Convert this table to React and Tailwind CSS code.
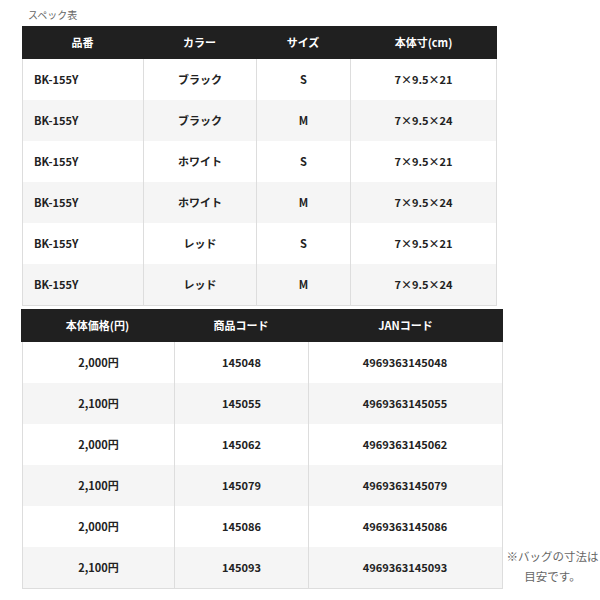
export default function App() {
  const t1 = [
    ["BK-155Y", "ブラック", "S", "7×9.5×21"],
    ["BK-155Y", "ブラック", "M", "7×9.5×24"],
    ["BK-155Y", "ホワイト", "S", "7×9.5×21"],
    ["BK-155Y", "ホワイト", "M", "7×9.5×24"],
    ["BK-155Y", "レッド", "S", "7×9.5×21"],
    ["BK-155Y", "レッド", "M", "7×9.5×24"],
  ];
  const t2 = [
    ["2,000円", "145048", "4969363145048"],
    ["2,100円", "145055", "4969363145055"],
    ["2,000円", "145062", "4969363145062"],
    ["2,100円", "145079", "4969363145079"],
    ["2,000円", "145086", "4969363145086"],
    ["2,100円", "145093", "4969363145093"],
  ];
  return (
    <div
      className="w-[600px] h-[600px] bg-white text-[#222]"
      style={{ fontFamily: '"Noto Sans CJK JP", "Noto Sans", sans-serif' }}
    >
      <div className="pt-[8px] pl-[28px] text-[10px] leading-[14px] text-[#666]">スペック表</div>
      <div className="ml-[22px] mt-[4px] w-[475px]">
        <div className="grid grid-cols-[121px_113px_94px_147px] h-[33px] bg-[#202020] text-white text-[11px] font-bold items-center text-center">
          <div>品番</div>
          <div>カラー</div>
          <div>サイズ</div>
          <div>本体寸(cm)</div>
        </div>
        <div className="border-x border-b border-[#dddddd]">
          {t1.map((r, i) => (
            <div
              key={i}
              className={`grid grid-cols-[120px_113px_94px_146px] h-[41px] text-[11px] font-bold ${i % 2 === 1 ? "bg-[#f5f5f5]" : "bg-white"}`}
            >
              <div className="flex items-center pl-[11px]">{r[0]}</div>
              <div className="flex items-center justify-center border-l border-[#dddddd]">{r[1]}</div>
              <div className="flex items-center justify-center border-l border-[#dddddd]">{r[2]}</div>
              <div className="flex items-center justify-center border-l border-[#dddddd]">{r[3]}</div>
            </div>
          ))}
        </div>
      </div>
      <div className="flex items-end mt-[3px]">
        <div className="ml-[21px] w-[482px] shrink-0">
          <div className="grid grid-cols-[153px_134px_195px] h-[33px] bg-[#202020] text-white text-[11px] font-bold items-center text-center">
            <div>本体価格(円)</div>
            <div>商品コード</div>
            <div>JANコード</div>
          </div>
          <div className="ml-[1px] border-x border-b border-[#dddddd]">
            {t2.map((r, i) => (
              <div
                key={i}
                className={`grid grid-cols-[151px_134px_193px] h-[41px] text-[11px] font-bold ${i % 2 === 1 ? "bg-[#f5f5f5]" : "bg-white"}`}
              >
                <div className="flex items-center justify-center">{r[0]}</div>
                <div className="flex items-center justify-center border-l border-[#dddddd]">{r[1]}</div>
                <div className="flex items-center justify-center border-l border-[#dddddd]">{r[2]}</div>
              </div>
            ))}
          </div>
        </div>
        <div className="ml-[3px] mb-[3px] w-[93px] shrink-0 whitespace-nowrap text-center text-[11.5px] leading-[20px] text-[#666]">
          <div>※バッグの寸法は</div>
          <div>目安です。</div>
        </div>
      </div>
    </div>
  );
}
